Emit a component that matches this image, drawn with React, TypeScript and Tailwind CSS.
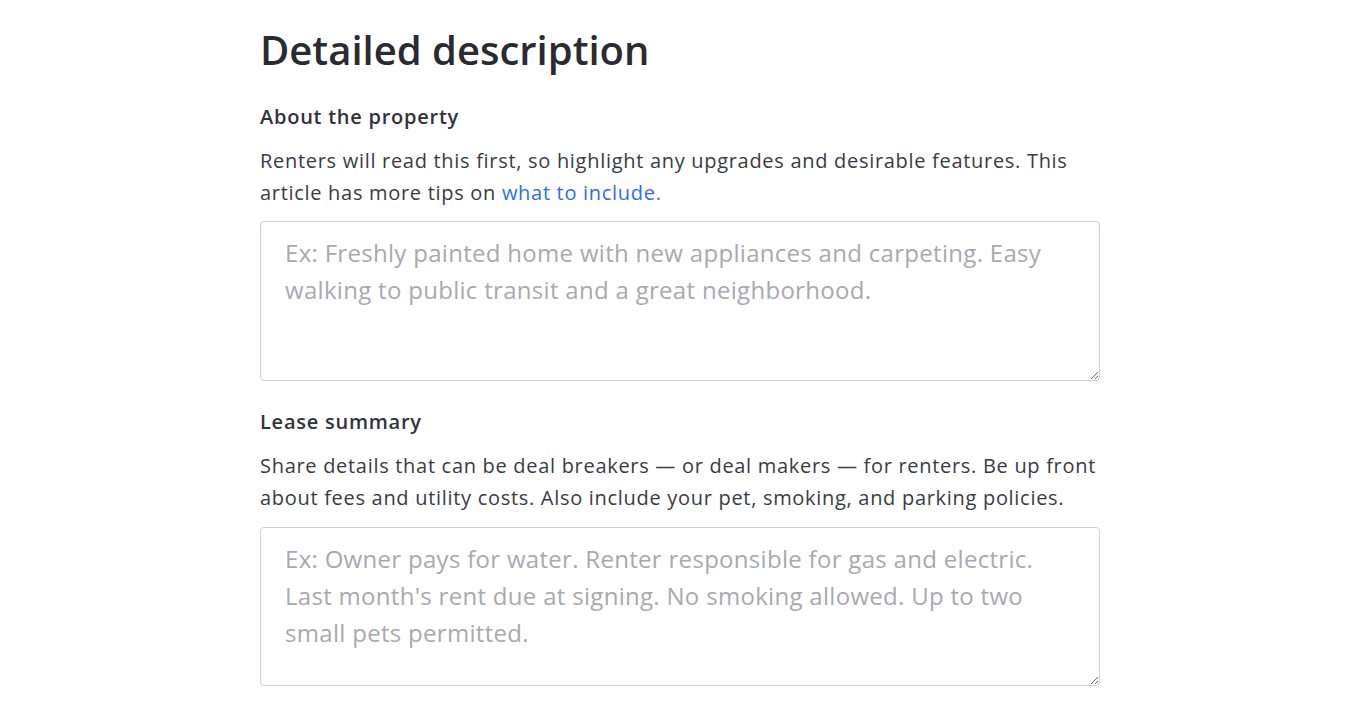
export default function App() {
  return (
    <div
      className="min-h-[714px] bg-white text-[#2d2d36]"
      style={{ fontFamily: '"Open Sans", "Noto Sans", sans-serif' }}
    >
      <div className="mx-auto w-[840px] pt-[26px]">
        <h1 className="text-[40px] font-semibold leading-[48px] text-[#2a2a33]">Detailed description</h1>

        <section className="mt-[27px]">
          <h2 className="text-[20px] font-semibold leading-[32px] tracking-[0.75px] text-[#32323b]">About the property</h2>
          <p className="mt-[12px] text-[20px] leading-[32px] tracking-[0.7px] text-[#3b3b44]">
            Renters will read this first, so highlight any upgrades and desirable features. This article has more tips on{" "}
            <a href="#" className="text-[#2a6ef5]">
              what to include.
            </a>
          </p>
          <textarea
            className="mt-[12px] block h-[160px] w-full resize-y rounded-[4px] border border-[#d1d1d6] px-6 pt-[12px] text-[24px] leading-[37px] tracking-[0.3px] text-[#2d2d36] outline-none placeholder:text-[#a9a9b1]"
            placeholder="Ex: Freshly painted home with new appliances and carpeting. Easy walking to public transit and a great neighborhood."
          />
        </section>

        <section className="mt-[25px]">
          <h2 className="text-[20px] font-semibold leading-[32px] tracking-[0.75px] text-[#32323b]">Lease summary</h2>
          <p className="mt-[12px] text-[20px] leading-[32px] tracking-[0.7px] text-[#3b3b44]">
            Share details that can be deal breakers — or deal makers — for renters. Be up front about fees and utility
            costs. Also include your pet, smoking, and parking policies.
          </p>
          <textarea
            className="mt-[13px] block h-[159px] w-full resize-y rounded-[4px] border border-[#d1d1d6] px-6 pt-[12px] text-[24px] leading-[37px] tracking-[0.3px] text-[#2d2d36] outline-none placeholder:text-[#a9a9b1]"
            placeholder="Ex: Owner pays for water. Renter responsible for gas and electric. Last month's rent due at signing. No smoking allowed. Up to two small pets permitted."
          />
        </section>
      </div>
    </div>
  );
}
